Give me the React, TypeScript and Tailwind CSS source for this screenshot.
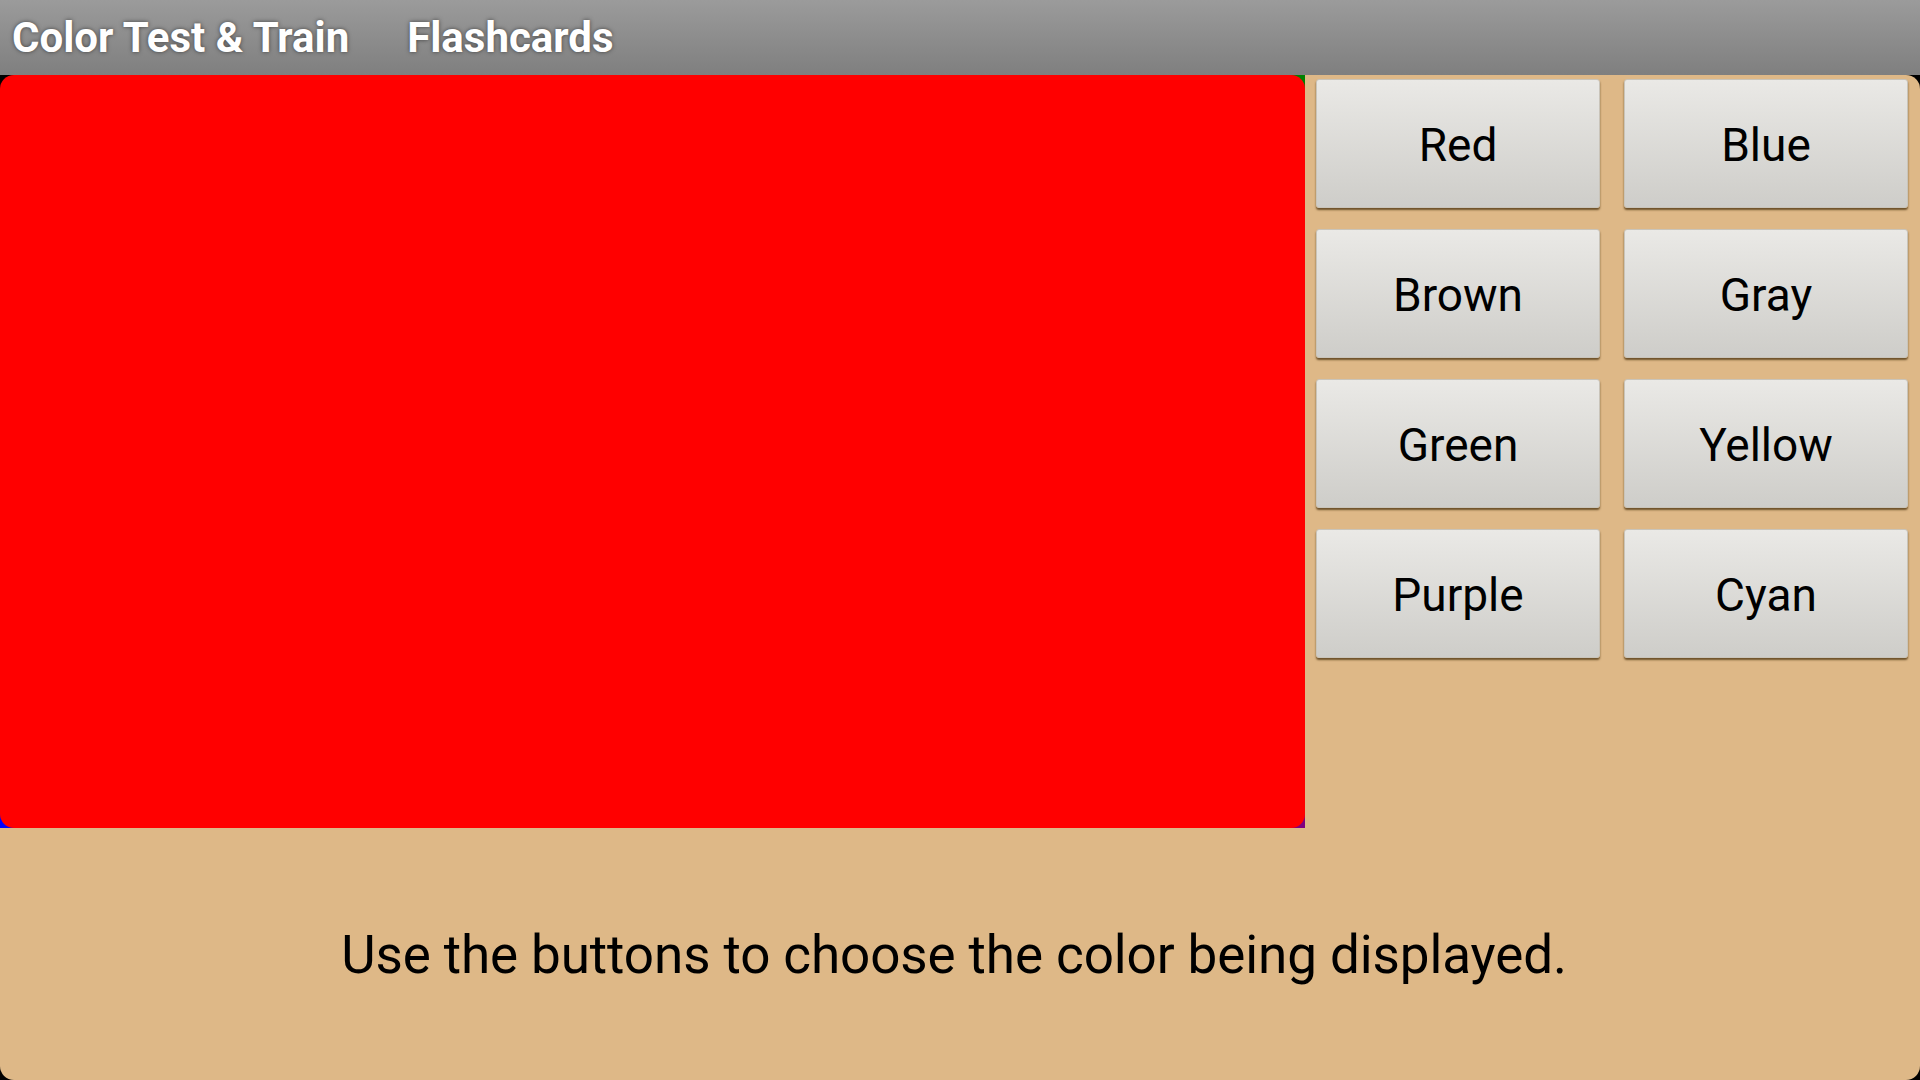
import React from 'react';

const colors = ['Red', 'Blue', 'Brown', 'Gray', 'Green', 'Yellow', 'Purple', 'Cyan'];

export default function App() {
  return (
    <div className="w-[1920px] h-[1080px] flex flex-col bg-black font-['Roboto',sans-serif] overflow-hidden">
      <header className="h-[75px] shrink-0 flex items-center bg-gradient-to-b from-[#9b9b9b] to-[#7f7f7f] text-white font-bold text-[42px] [text-shadow:0_0_4px_rgba(0,0,0,0.55)]">
        <span className="ml-[12px]">Color Test &amp; Train</span>
        <span className="ml-[58px]">Flashcards</span>
      </header>

      <main className="flex-1 flex flex-col bg-[#deb887] rounded-[14px]">
        <div className="flex">
          <div className="w-[1305px] h-[753px] shrink-0 bg-[conic-gradient(#008000_0deg_90deg,#800080_90deg_180deg,#0000ff_180deg_270deg,#000000_270deg_360deg)]">
            <div className="w-full h-full rounded-[14px] bg-[#ff0000]" />
          </div>

          <div className="flex-1 grid grid-cols-2 content-start gap-x-[24px] gap-y-[21px] pl-[11px] pr-[12px] pt-[4px]">
            {colors.map((c) => (
              <button
                key={c}
                className="h-[129px] pt-[3px] rounded-[3px] bg-gradient-to-b from-[#eae9e6] to-[#cecdc9] border border-[#c9c4ba] shadow-[0_2px_2px_rgba(70,45,10,0.75)] text-black text-[46px]"
              >
                {c}
              </button>
            ))}
          </div>
        </div>

        <div className="flex-1 flex items-center justify-center pt-[4px] pr-[12px]">
          <p className="text-black text-[53px] tracking-[-0.1px]">Use the buttons to choose the color being displayed.</p>
        </div>
      </main>
    </div>
  );
}
